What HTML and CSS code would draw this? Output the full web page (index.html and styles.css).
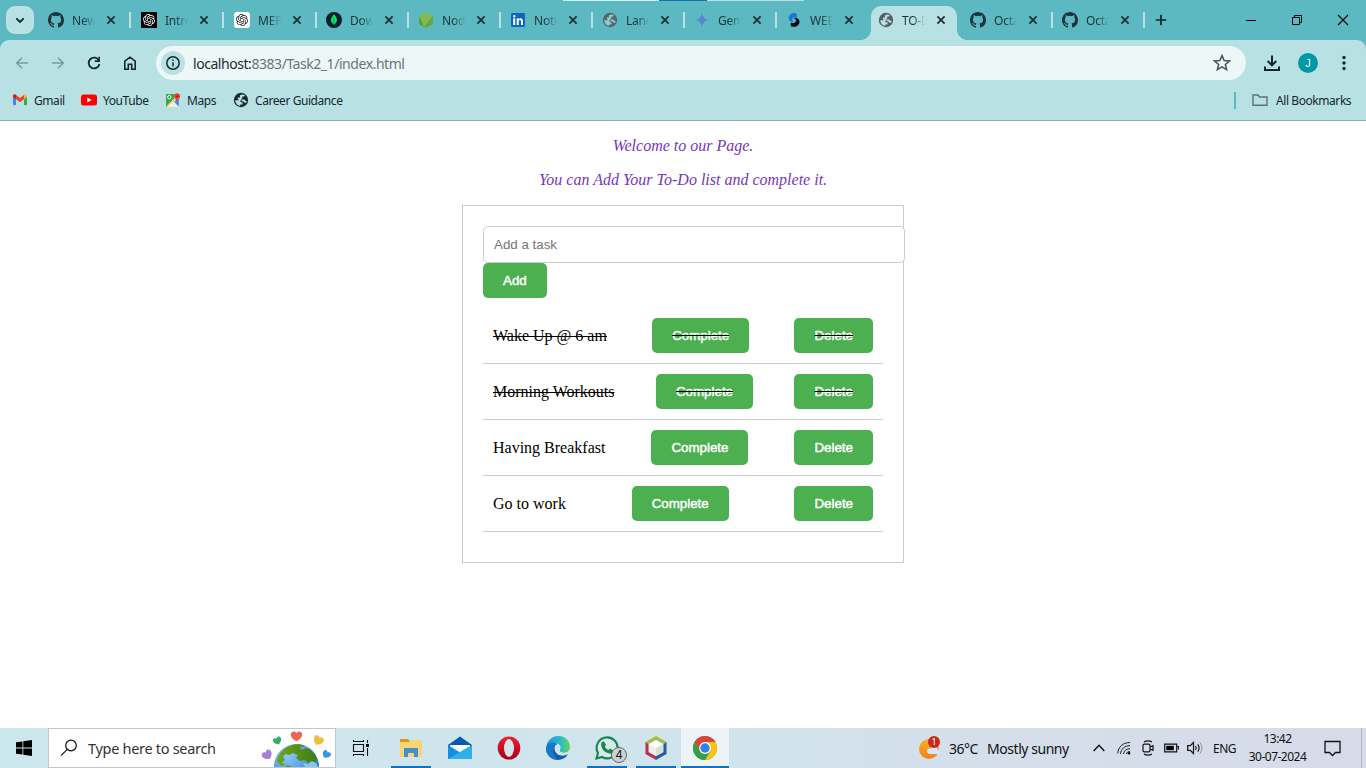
FILE: index.html
```html
<!DOCTYPE html>
<html lang="en">
<head>
<meta charset="utf-8">
<title>TO-DO List</title>
<link rel="stylesheet" href="styles.css">
</head>
<body>
<svg class="defs" aria-hidden="true">
  <symbol id="github" viewBox="0 0 16 16"><path fill="#20333d" d="M8 0C3.58 0 0 3.58 0 8c0 3.54 2.29 6.53 5.47 7.59.4.07.55-.17.55-.38 0-.19-.01-.82-.01-1.49-2.01.37-2.53-.49-2.69-.94-.09-.23-.48-.94-.82-1.13-.28-.15-.68-.52-.01-.53.63-.01 1.08.58 1.23.82.72 1.21 1.87.87 2.33.66.07-.52.28-.87.51-1.07-1.78-.2-3.64-.89-3.64-3.95 0-.87.31-1.59.82-2.15-.08-.2-.36-1.02.08-2.12 0 0 .67-.21 2.2.82a7.6 7.6 0 0 1 4 0c1.53-1.04 2.2-.82 2.2-.82.44 1.1.16 1.92.08 2.12.51.56.82 1.27.82 2.15 0 3.07-1.87 3.75-3.65 3.95.29.25.54.73.54 1.48 0 1.07-.01 1.93-.01 2.2 0 .21.15.46.55.38A8 8 0 0 0 16 8c0-4.42-3.58-8-8-8z"/></symbol>
  <symbol id="knot" viewBox="0 0 24 24"><path fill="currentColor" d="M22.282 9.821a5.985 5.985 0 0 0-.516-4.910 6.046 6.046 0 0 0-6.510-2.900A6.065 6.065 0 0 0 4.981 4.182a5.985 5.985 0 0 0-3.998 2.900 6.046 6.046 0 0 0 .743 7.097 5.980 5.980 0 0 0 .511 4.911 6.051 6.051 0 0 0 6.515 2.900A5.985 5.985 0 0 0 13.260 24a6.056 6.056 0 0 0 5.772-4.206 5.990 5.990 0 0 0 3.998-2.900 6.056 6.056 0 0 0-.748-7.073zm-9.022 12.608a4.476 4.476 0 0 1-2.876-1.040l.142-.081 4.778-2.758a.795.795 0 0 0 .393-.681v-6.737l2.020 1.169a.071.071 0 0 1 .038.052v5.582a4.504 4.504 0 0 1-4.495 4.494zM3.600 18.304a4.470 4.470 0 0 1-.535-3.014l.142.085 4.783 2.758a.771.771 0 0 0 .780 0l5.843-3.368v2.332a.080.080 0 0 1-.033.062L9.740 19.950a4.500 4.500 0 0 1-6.140-1.646zM2.340 7.896a4.485 4.485 0 0 1 2.366-1.973v5.677a.766.766 0 0 0 .388.677l5.815 3.354-2.020 1.169a.076.076 0 0 1-.071 0l-4.830-2.787A4.504 4.504 0 0 1 2.340 7.872zm16.597 3.855l-5.833-3.387L15.119 7.200a.076.076 0 0 1 .071 0l4.830 2.791a4.494 4.494 0 0 1-.676 8.105v-5.678a.790.790 0 0 0-.407-.667zm2.010-3.023l-.141-.085-4.774-2.782a.776.776 0 0 0-.785 0L9.409 9.230V6.897a.066.066 0 0 1 .028-.061l4.830-2.787a4.500 4.500 0 0 1 6.680 4.660zM8.307 12.863l-2.020-1.164a.080.080 0 0 1-.038-.057V6.075a4.500 4.500 0 0 1 7.376-3.454l-.142.081-4.778 2.758a.795.795 0 0 0-.393.681zm1.097-2.366l2.602-1.500 2.607 1.500v2.999l-2.597 1.500-2.607-1.500z"/></symbol>
  <symbol id="globe" viewBox="0 0 16 16"><circle cx="8" cy="8" r="7.2" fill="currentColor"/><path fill="var(--land)" d="M2.200 8.300h3.500c1.200 0 2 .8 2 1.900H9.500v2.300H7.200v1.400A6 6 0 0 1 2.200 8.300zM7 3.200q2.800-1.300 4.900 0L11 4.500H9.300v1.400L7.700 7.400h3.100q1.500 0 1.600 1.500h1.300a5.800 5.800 0 0 1-.9 2.200Q11 11 10.800 9.600 9.500 9.800 8.900 8.600H6.100L4.900 6.800V5.400H7z"/></symbol>
  <symbol id="x" viewBox="0 0 10 10"><path d="M1.4 1.4l7.2 7.2M8.6 1.4L1.4 8.6" stroke="#1b2c33" stroke-width="1.7"/></symbol>
  <symbol id="heart" viewBox="0 0 12 12"><path fill="currentColor" d="M6 11.300C3 9.500.3 7.500.3 4.400.3 1.200 4.300.3 6 3 7.700.3 11.700 1.200 11.700 4.400c0 3.100-2.700 5.100-5.700 6.900z"/></symbol>
</svg>

<header class="browser">
  <div class="tabstrip">
    <button class="tab-search"><svg width="10" height="7" viewBox="0 0 10 7"><path d="M1.3 1.3L5 5l3.700-3.700" fill="none" stroke="#10242a" stroke-width="1.800"/></svg></button>
    <div class="tabs">
      <div class="tab"><svg class="fav"><use href="#github"/></svg><span class="name">New</span><svg class="close"><use href="#x"/></svg></div>
      <div class="tab"><span class="fav ai ai-dark"><svg><use href="#knot"/></svg></span><span class="name">Intro</span><svg class="close"><use href="#x"/></svg></div>
      <div class="tab"><span class="fav ai ai-light"><svg><use href="#knot"/></svg></span><span class="name">MER</span><svg class="close"><use href="#x"/></svg></div>
      <div class="tab"><svg class="fav" viewBox="0 0 16 16"><circle cx="8" cy="8" r="8" fill="#001e2b"/><path d="M8 2.300c4 4.200 3.800 7.700.3 10.200L8 14l-.3-1.500C4.200 10 4 6.500 8 2.300z" fill="#00ed64"/><path d="M8 5v8" stroke="#067b40" stroke-width=".7"/></svg><span class="name">Dow</span><svg class="close"><use href="#x"/></svg></div>
      <div class="tab"><svg class="fav" viewBox="0 0 16 16"><path d="M8 .3l6.800 3.900v7.800L8 15.800 1.200 12V4.200z" fill="#7dba45"/><path d="M1.200 4.200L8 .3l6.800 3.900L6 15z" fill="#83b955"/><path d="M1.200 4.200L6 14.700 1.200 12z" fill="#5d9a3c"/><path d="M14.800 4.200V12L8 15.800l-2-1.100z" fill="#66a63e"/></svg><span class="name">Nod</span><svg class="close"><use href="#x"/></svg></div>
      <div class="tab"><svg class="fav" viewBox="0 0 16 16"><rect x="1" y="1" width="14" height="14" rx="1" fill="#0a66c2"/><path d="M3.200 6.300h2V13h-2zM6.700 6.300h2v1c1-1.800 4.300-1.500 4.300 1.700v4h-2V9.500c0-2.200-2.300-2-2.300 0V13h-2z" fill="#fff"/><circle cx="4.200" cy="4.200" r="1.200" fill="#fff"/></svg><span class="name">Noti</span><svg class="close"><use href="#x"/></svg></div>
      <div class="tab"><svg class="fav globe-tab"><use href="#globe"/></svg><span class="name">Land</span><svg class="close"><use href="#x"/></svg></div>
      <div class="tab"><svg class="fav" viewBox="0 0 16 16"><defs><linearGradient id="gem"><stop offset="0" stop-color="#4d91d8"/><stop offset=".6" stop-color="#587fd8"/><stop offset="1" stop-color="#9b83c8"/></linearGradient></defs><path d="M8 1c.9 4.300 2.700 6.100 7 7-4.300.9-6.100 2.700-7 7-.9-4.300-2.700-6.100-7-7 4.300-.9 6.100-2.700 7-7z" fill="url(#gem)"/></svg><span class="name">Gem</span><svg class="close"><use href="#x"/></svg></div>
      <div class="tab last-before"><svg class="fav" viewBox="0 0 16 16"><path d="M9.800 1.200C5 .5 2 4 3 7.200c.7 2.300 3 3 4.800 2.700C5.500 8.800 6 5.800 8.300 5.300c1.200-.3 2 .2 2.300.4.500-1.700.3-3.500-.8-4.500z" fill="#1976d2"/><path d="M5.500 14.400c5 1.500 8.400-1.700 8-5.200C13.100 6.500 10 5 7.800 6.200c2.700.6 3 3.700.5 4.600-1.500.5-2.600.1-3.300-.4-.6 1.400-.4 3 .5 4z" fill="#050b10"/></svg><span class="name">WEB</span><svg class="close"><use href="#x"/></svg></div>
      <div class="tab active"><svg class="fav globe-active"><use href="#globe"/></svg><span class="name">TO-D</span><svg class="close"><use href="#x"/></svg></div>
      <div class="tab"><svg class="fav"><use href="#github"/></svg><span class="name">Octa</span><svg class="close"><use href="#x"/></svg></div>
      <div class="tab"><svg class="fav"><use href="#github"/></svg><span class="name">Octa</span><svg class="close"><use href="#x"/></svg></div>
    </div>
    <svg class="plus" viewBox="0 0 12 12"><path d="M6 .8v10.400M.8 6h10.400" stroke="#10242a" stroke-width="1.700"/></svg>
    <div class="win">
      <svg viewBox="0 0 12 12"><path d="M1 6.500h10" stroke="#000"/></svg>
      <svg viewBox="0 0 12 12"><path d="M1.500 3.500h7v7h-7zM3.500 3.500v-2h7v7h-2" fill="none" stroke="#000"/></svg>
      <svg viewBox="0 0 12 12"><path d="M1 1l10 10M11 1L1 11" stroke="#000" stroke-width="1.100"/></svg>
    </div>
    <div class="peek"></div>
  </div>

  <div class="chrome-panel">
    <div class="toolbar">
      <svg class="nav" viewBox="0 0 16 16"><path d="M14 8H2.800M8 2.700L2.700 8 8 13.300" fill="none" stroke="#7c9a9f" stroke-width="1.500"/></svg>
      <svg class="nav" viewBox="0 0 16 16"><path d="M2 8h11.200M8 2.700L13.300 8 8 13.300" fill="none" stroke="#7c9a9f" stroke-width="1.500"/></svg>
      <svg class="nav" viewBox="0 0 16 16"><path d="M13 5.700A5.400 5.400 0 1 0 13.400 9" fill="none" stroke="#14272d" stroke-width="1.800"/><path d="M13.900 1.800v5.100H8.800V5.300h3.500V1.800z" fill="#14272d"/></svg>
      <svg class="nav" viewBox="0 0 16 16"><path d="M2.800 6.200L8 2.200l5.200 4v8H9.700V9.300H6.300v4.900H2.800z" fill="none" stroke="#14272d" stroke-width="1.600"/></svg>
      <div class="url">
        <span class="info"><svg viewBox="0 0 16 16"><circle cx="8" cy="8" r="6.200" fill="none" stroke="#14272d" stroke-width="1.500"/><path d="M8 7.200v4.200M8 4.500v1.600" stroke="#14272d" stroke-width="1.500"/></svg></span>
        <span class="address"><b>localhost:</b>8383/Task2_1/index.html</span>
        <svg class="star" viewBox="0 0 16 16"><path d="M8 1.500l1.900 4.300 4.700.4-3.600 3.100 1.100 4.600L8 11.500l-4.100 2.400L5 9.300 1.400 6.200l4.700-.4z" fill="none" stroke="#46575c" stroke-width="1.400"/></svg>
      </div>
      <svg class="download" viewBox="0 0 18 18"><path d="M9 1.500v9.500M4.700 7L9 11.300 13.300 7M2 12.500V16h14v-3.500" fill="none" stroke="#14272d" stroke-width="2"/></svg>
      <span class="avatar">J</span>
      <svg class="dots" viewBox="0 0 4 16"><g fill="#14272d"><circle cx="2" cy="2.500" r="1.700"/><circle cx="2" cy="8" r="1.700"/><circle cx="2" cy="13.500" r="1.700"/></g></svg>
    </div>
    <nav class="bookmarks">
      <a class="bm gmail"><svg viewBox="0 0 16 16"><path d="M1 4v9h3V7z" fill="#4285f4"/><path d="M15 4v9h-3V7z" fill="#34a853"/><path d="M1 4.500V4c0-1.600 1.700-2 2.700-1.200L8 6l4.300-3.200V7L8 10.200 3.800 7z" fill="#ea4335"/><path d="M1 4c0-1.700 1.700-2 2.700-1.200L4 3v4.200L1 5z" fill="#c5221f"/><path d="M15 4c0-1.700-1.700-2-2.700-1.200L12 3v4.200L15 5z" fill="#fbbc04"/></svg><span>Gmail</span></a>
      <a class="bm youtube"><svg viewBox="0 0 16 16"><rect y="2.500" width="16" height="11" rx="2.500" fill="#f00"/><path d="M6.300 5.600v4.800L10.700 8z" fill="#fff"/></svg><span>YouTube</span></a>
      <a class="bm maps"><svg viewBox="0 0 16 16"><path d="M1 2h12.500v12.500H1z" fill="#34a853"/><path d="M1 14.500l12-12v3.500l-8 8.500z" fill="#fbd04a"/><path d="M3 15l6-6 5.500 6z" fill="#eceff1"/><path d="M13.500 6v8.500L8.500 9z" fill="#4285f4"/><path d="M3.500 15L12 6.500" stroke="#fff"/><path d="M12 10c-.3-2.300-2.500-3-2.800-5.400-.6-4.400 6.200-4.800 6 0C15 7 12.500 7.500 12 10z" fill="#ea4335"/><circle cx="12.200" cy="4.300" r="1.100" fill="#7b231d"/><circle cx="4.300" cy="5.200" r="1.700" fill="none" stroke="#fff"/></svg><span>Maps</span></a>
      <a class="bm career"><svg class="globe-bm"><use href="#globe"/></svg><span>Career Guidance</span></a>
      <a class="bm all"><svg viewBox="0 0 16 16"><path d="M1 3h5l1.500 2H15v8.300H1z" fill="none" stroke="#5b7278" stroke-width="1.400"/></svg><span>All Bookmarks</span></a>
    </nav>
  </div>
</header>

<main class="page">
  <p>Welcome to our Page.</p>
  <p>You can Add Your To-Do list and complete it.</p>
  <section class="todo">
    <input type="text" placeholder="Add a task">
    <button class="btn">Add</button>
    <ul>
      <li class="done"><span>Wake Up @ 6 am</span><button class="btn">Complete</button><button class="btn">Delete</button></li>
      <li class="done"><span>Morning Workouts</span><button class="btn">Complete</button><button class="btn">Delete</button></li>
      <li><span>Having Breakfast</span><button class="btn">Complete</button><button class="btn">Delete</button></li>
      <li><span>Go to work</span><button class="btn">Complete</button><button class="btn">Delete</button></li>
    </ul>
  </section>
</main>

<footer class="taskbar">
  <div class="start"><svg width="16" height="16" viewBox="0 0 16 16"><path d="M0 2.300l6.500-.9v6.100H0zM7.300 1.300L16 0v7.500H7.300zM0 8.400h6.500v6.200L0 13.700zM7.300 8.400H16V16l-8.700-1.200z"/></svg></div>
  <div class="search">
    <svg class="lens" viewBox="0 0 18 18"><circle cx="11" cy="6.500" r="5.300" fill="none" stroke="#111" stroke-width="1.200"/><path d="M7.300 10.300L1 16.700" stroke="#111" stroke-width="1.200"/></svg>
    <span>Type here to search</span>
    <svg class="earth" viewBox="0 0 74 38">
      <defs><radialGradient id="sea" cx=".3" cy=".25" r=".8"><stop offset="0" stop-color="#8bc9f8"/><stop offset="1" stop-color="#2874c8"/></radialGradient><linearGradient id="land"><stop offset="0" stop-color="#72a51f"/><stop offset="1" stop-color="#3c7d13"/></linearGradient></defs>
      <circle cx="35.500" cy="37.500" r="22.500" fill="url(#sea)"/>
      <path d="M30 16.500q4-2 10-1l4 1.500-5 1 1 3 5-2 3 1q6 4 8 10l-2 4-4-2-3 2-3-3-5 1-4-3 2-3-5-2-4 2-4-1-2 3 2 3-3 2 3 3-4 1-4-5q1-9 11-14.500z" fill="url(#land)"/>
      <path d="M42 34l5 1 4-3 4 2 2 4H44z" fill="#8bc4ee"/>
      <path d="M25 38l1-2 5 2z" fill="#60961e"/>
      <use href="#heart" x="29" y="1" width="13" height="12" color="#ec6653"/>
      <use href="#heart" x="12" y="7" width="9" height="9" color="#35ad65" transform="rotate(-22 17 12)"/>
      <use href="#heart" x="51" y="6" width="11" height="11" color="#efbd39" transform="rotate(28 57 13)"/>
      <use href="#heart" x="1" y="20" width="11" height="11" color="#a780d4" transform="rotate(-35 7 26)"/>
      <use href="#heart" x="60" y="21" width="9" height="10" color="#3698dc" transform="rotate(35 66 27)"/>
    </svg>
  </div>
  <div class="taskview"><svg width="17" height="16" viewBox="0 0 17 16"><path d="M1.500 4.500h10v7h-10zM1 1.500h11M1 14.500h11M1.500 0v2M11.500 0v2M1.500 14v2M11.500 14v2M15.500 0v3M15.500 8v8" fill="none" stroke="#111" stroke-width="1.100"/><path d="M14 4h3v3h-3z"/></svg></div>
  <div class="apps">
    <div class="app open"><svg viewBox="0 0 24 24"><path d="M1 3h8l2 2h11v5H1z" fill="#d69b1c"/><path d="M1 6h9l2-2h11v17H1z" fill="#f8d675"/><path d="M5 12h14v9h-4v-4H9v4H5z" fill="#3f91d0"/></svg></div>
    <div class="app"><svg viewBox="0 0 24 24"><path d="M0 9l12-8.500L24 9v3H0z" fill="#075aae"/><path d="M2 9h20v8H2z" fill="#f4fbff"/><path d="M0 9l12 7.500L24 9v14H0z" fill="#168ddd"/><path d="M0 23L24 9v14z" fill="#2fb0ea"/></svg></div>
    <div class="app"><svg viewBox="0 0 24 24"><defs><linearGradient id="op" x2="0" y2="1"><stop offset="0" stop-color="#f51d32"/><stop offset="1" stop-color="#a70014"/></linearGradient></defs><ellipse cx="12" cy="12" rx="11.300" ry="11.500" fill="url(#op)"/><ellipse cx="12" cy="12" rx="5" ry="9" fill="#d4e5ee"/></svg></div>
    <div class="app"><svg viewBox="0 0 24 24"><defs><linearGradient id="edge"><stop offset="0" stop-color="#2394e0"/><stop offset=".55" stop-color="#25b9cd"/><stop offset="1" stop-color="#63d65c"/></linearGradient></defs><path d="M.3 11C2-3 22-4 24 10c.6 5-4 8-9 6-2-.8-1-2-.5-3.500 1-4-4-6-7.500-5C4 8 1 9 .3 11z" fill="url(#edge)"/><path d="M.2 12C1 6 8 6 11 8c-4 2-3 9 2 11 4 1.500 7 0 9-.7C18 25 9 25.500 4 21c-3-3-4-6-3.800-9z" fill="#105ba8"/><path d="M.2 12C1 6 8 6 11 8c-6 3-4 13 2 16C6 24.500-.500 19 .2 12z" fill="#1679c7"/></svg></div>
    <div class="app open wa"><svg viewBox="0 0 24 24"><path d="M1.500 22.500L3 17A10.500 10.500 0 1 1 7 21z" fill="#d8e9ec" stroke="#178253" stroke-width="2.100"/><path d="M7 6l2-.5 2 3.500-1.200 1.600c1 1.900 2 2.700 3.700 3.500L15 12.600l3.500 1.900c-.2 2.500-2 3.500-4 3.100C10 16.700 7.300 14 6.300 10c-.3-1.500-.1-3 .7-4z" fill="#178253"/></svg><i>4</i></div>
    <div class="app open"><svg viewBox="0 0 24 24"><path d="M12 0l10.500 6-3 2L12 4 4.500 8l-3-2z" fill="#a5bd43"/><path d="M1.500 6l3 2v8l7.500 4v4L1.500 18z" fill="#b82f5b"/><path d="M22.500 6l-3 2v8L12 20v4l10.500-6z" fill="#295c9b"/><path d="M12 4l7 4v8l-7 4-7-4V8z" fill="#fff"/><path d="M12 12l7-4v8l-7 4z" fill="#d9e1cf"/><path d="M5 8l7 4v8l-7-4z" fill="#f0eee8"/></svg></div>
    <div class="app open current"><svg viewBox="0 0 24 24"><circle cx="12" cy="12" r="12" fill="#34a853"/><path d="M1.600 6A12 12 0 0 1 22.400 6H12L6.800 15z" fill="#dc4437"/><path d="M22.400 6A12 12 0 0 1 12 24l5.200-9L12 6z" fill="#fbc116"/><path d="M1.600 6l5.200 9 5.200 3 5.200-3L12 24A12 12 0 0 1 1.600 6z" fill="#34a047"/><circle cx="12" cy="12" r="5.900" fill="#fff"/><circle cx="12" cy="12" r="4.700" fill="#347fe8"/></svg></div>
  </div>
  <div class="tray">
    <svg class="weather" viewBox="0 0 24 24"><defs><linearGradient id="sun" x2="0" y2="1"><stop offset="0" stop-color="#f5b126"/><stop offset="1" stop-color="#f18116"/></linearGradient></defs><circle cx="11" cy="13" r="10" fill="url(#sun)"/><path d="M12 18a3 3 0 0 1-3-3c0-2 2-3 3-2 2-4 8-2 8 1 4 0 4 4 1 4z" fill="#d7e6fa"/><circle cx="16" cy="6" r="6" fill="#c42b1c"/><text x="16" y="9.300" text-anchor="middle" fill="#fff">1</text></svg>
    <span class="temp">36°C</span><span class="sky">Mostly sunny</span>
    <svg class="chev" viewBox="0 0 12 8"><path d="M.7 7L6 1.300 11.300 7" fill="none" stroke="#111" stroke-width="1.400"/></svg>
    <svg class="wifi" viewBox="0 0 14 14"><g fill="none" stroke="#222"><path d="M.8 12.500C1 6 6 1.500 13 1.500M3.500 13c.2-4.800 4-8.300 9.500-8.400M6.500 13c.2-3 2.700-5.300 6.500-5.300M9.300 13c.2-1.500 1.500-2.500 3.700-2.500" /></g><circle cx="12" cy="12.300" r="1.300"/></svg>
    <svg class="meet" viewBox="0 0 12 16"><path d="M2 2Q6-.3 10 2M2 14q4 2.300 8 0M1 5.500Q1 4.200 2.300 4.200h4.400Q8 4.200 8 5.500v5q0 1.300-1.300 1.300H2.300Q1 11.800 1 10.500zM8 7l3-1.300v4.600L8 9" fill="none" stroke="#111" stroke-width="1.200"/></svg>
    <svg class="batt" viewBox="0 0 15 10"><path d="M.7 1.200h12v7.600H.7zM13.500 3.500h1v3" fill="none" stroke="#111" stroke-width="1.200"/><path d="M2.300 2.800h7.500v4.400H2.300z"/></svg>
    <svg class="vol" viewBox="0 0 17 14"><path d="M.7 4.700h2.600L6.500 1.500v11L3.300 9.300H.7zM8.500 5q1.500 2 0 4M10.700 3.300q2.800 3.700 0 7.400" fill="none" stroke="#111" stroke-width="1.200"/><path d="M13 1.500q4 5.500 0 11" fill="none" stroke="#8a929b"/></svg>
    <span class="lang">ENG</span>
    <div class="clock"><span>13:42</span><span class="date">30-07-2024</span></div>
    <svg class="note" viewBox="0 0 17 17"><path d="M1 1.500h15v11h-4.500l-3 3-3-3H1z" fill="none" stroke="#111" stroke-width="1.300"/></svg>
    <div class="desk"></div>
  </div>
</footer>
</body>
</html>
```
FILE: styles.css
```css
* { box-sizing: border-box; }
body { margin: 0; width: 1366px; height: 768px; overflow: hidden; display: flex; flex-direction: column; background: #fff; font-family: "Noto Sans", "Open Sans", sans-serif; }
svg { display: block; flex: none; }
button { border: 0; padding: 0; }
.defs { position: absolute; width: 0; height: 0; }

.browser { height: 121px; background: #5cb8c1; flex: none; }
.tabstrip { position: relative; height: 40px; display: flex; align-items: center; }
.tab-search { margin: 0 5px 0 6px; width: 28px; height: 28px; border-radius: 9px; background: #b8e1e4; display: grid; place-items: center; }
.tabs { display: grid; grid-template-columns: 92px 93px 93px repeat(9, 92px); height: 40px; }
.tab { position: relative; height: 40px; display: flex; align-items: center; padding-left: 9px; }
.tab::after { content: ""; position: absolute; right: 0; top: 12px; width: 2px; height: 16px; background: #b8e1e4; }
.tab.last-before::after { display: none; }
.fav { width: 16px; height: 16px; flex: none; }
.name { width: 24px; margin-left: 8px; font-size: 12px; letter-spacing: -.2px; white-space: nowrap; overflow: hidden; color: #1b343b; -webkit-mask-image: linear-gradient(90deg, #000 45%, transparent 96%); mask-image: linear-gradient(90deg, #000 45%, transparent 96%); }
.close { width: 10px; height: 10px; margin-left: 10px; }
.tab:nth-child(2), .tab:nth-child(3) { padding-left: 10px; }
.ai { display: grid; place-items: center; }
.ai svg { width: 12px; height: 12px; }
.ai-dark { background: #000; color: #fff; }
.ai-light { background: #fff; color: #222; border-radius: 3px; }
.globe-tab { color: #55676c; --land: #8ecbd1; }
.globe-active { color: #555e62; --land: #b8e1e4; }
.globe-bm { color: #1d2b30; --land: #b8e1e4; }
.tab.active { z-index: 0; }
.tab.active::before { content: ""; position: absolute; z-index: -1; left: 2px; width: 86px; top: 6px; bottom: 0; border-radius: 10px 10px 0 0; background: #b8e1e4; }
.tab.active::after { z-index: -1; left: -8px; right: auto; top: 30px; width: 106px; height: 10px; background: radial-gradient(circle at 0 0, transparent 9.600px, #b8e1e4 10px) 0 0 / 10px 10px no-repeat, radial-gradient(circle at 100% 0, transparent 9.600px, #b8e1e4 10px) 100% 0 / 10px 10px no-repeat; }
.plus { width: 12px; height: 12px; margin-left: 10px; }
.win { margin: 0 17px 0 auto; display: flex; gap: 34px; }
.win svg { width: 12px; height: 12px; }
.peek { position: absolute; left: 563px; top: 0; width: 241px; height: 1px; background: linear-gradient(90deg, #d3eef0 96px, #1272b6 96px 144px, #b8e1e4 144px); }

.chrome-panel { height: 81px; background: #b8e1e4; border-radius: 9px 9px 0 0; border-bottom: 1px solid #91aeb1; }
.toolbar { height: 46px; display: flex; align-items: center; padding-left: 14px; }
.nav { width: 16px; height: 16px; margin-right: 20px; }
.nav:nth-child(4) { margin-right: 18px; }
.url { width: 1090px; height: 34px; border-radius: 17px; background: #edf7f8; display: flex; align-items: center; padding-left: 5px; }
.info { width: 24px; height: 24px; border-radius: 50%; background: #b8e1e4; display: grid; place-items: center; }
.info svg { width: 16px; height: 16px; }
.address { margin-left: 8px; font-size: 14px; letter-spacing: -.45px; color: #66767a; }
.address b { font-weight: 400; color: #1b2a2e; }
.star { width: 18px; height: 18px; margin: 0 15px 0 auto; }
.download { width: 18px; height: 18px; margin-left: 17px; }
.avatar { width: 20px; height: 20px; margin-left: 17px; border-radius: 50%; background: #0097a7; color: #fff; display: grid; place-items: center; font: 11px "Liberation Sans", sans-serif; }
.dots { width: 4px; height: 16px; margin-left: 24px; }
.bookmarks { display: flex; align-items: center; height: 28px; font-size: 12px; color: #14272d; padding-left: 12px; }
.bm { display: flex; align-items: center; gap: 6px; white-space: nowrap; letter-spacing: -.43px; }
.bm svg { width: 16px; height: 16px; }
.gmail { width: 69px; }
.youtube { width: 85px; }
.maps { width: 67px; }
.maps svg { margin-left: -1px; }
.all { margin-left: auto; margin-right: 15px; border-left: 2px solid #5cb8c1; padding-left: 16px; gap: 8px; width: 117px; }

.page { flex: 1; font: 16px/18px "Liberation Serif", "Times New Roman", serif; padding-top: 16px; }
.page p { margin: 0 0 16px; text-align: center; font-style: italic; color: #7636bd; }
.todo { width: 442px; height: 358px; margin: 0 0 0 462px; border: 1px solid #ccc; padding: 20px; }
.todo input { display: block; width: 422px; height: 37px; padding: 10px; border: 1px solid #ccc; border-radius: 5px; font: 13.333px "Liberation Sans", Arial, sans-serif; }
.btn { height: 35px; padding: 0 20px; background: #4caf50; color: #fff; border-radius: 5px; font: 13.333px "Liberation Sans", Arial, sans-serif; -webkit-text-stroke: .45px #fff; display: block; }
.todo ul { list-style: none; margin: 10px 0; padding: 0; }
.todo li { height: 56px; padding: 10px; display: flex; justify-content: space-between; align-items: center; border-bottom: 1px solid #ccc; }
.done span, .done .btn { text-decoration: line-through #000; }

.taskbar { height: 40px; flex: none; display: flex; background: linear-gradient(90deg, #cde7ef, #d0e4ed 50%, #d5deea 75%, #d7dbe9); color: #111; }
.start { width: 48px; display: grid; place-items: center; }
.search { width: 288px; height: 40px; background: #fff; border: 1px solid #bfc9cd; display: flex; align-items: center; padding-left: 11px; font-size: 14.500px; letter-spacing: -.3px; color: #333; }
.lens { width: 18px; height: 18px; margin-right: 10px; }
.earth { width: 74px; height: 38px; margin-left: auto; }
.taskview { width: 48px; display: grid; place-items: center; }
.apps { display: flex; padding-left: 3px; gap: 1px; }
.app { position: relative; width: 48px; height: 40px; display: grid; place-items: center; }
.app svg { width: 24px; height: 24px; }
.app.open::after { content: ""; position: absolute; left: 4px; right: 4px; bottom: 0; height: 2px; background: #0873c9; }
.current { background: #edf4f7; }
.app.current::after { left: 0; right: 0; }
.wa i { position: absolute; left: 28px; top: 19px; width: 16px; height: 16px; border-radius: 50%; border: 1px solid #666; background: #cbd2d5; font: 12px/14px "Liberation Sans", sans-serif; text-align: center; }
.tray { margin-left: auto; width: 448px; display: flex; align-items: center; white-space: nowrap; font-size: 14px; }
.weather { width: 24px; height: 24px; }
.weather text { font: 9px "Noto Sans", sans-serif; }
.temp { width: 38px; margin-left: 7px; letter-spacing: -.5px; }
.sky { width: 106px; letter-spacing: -.45px; }
.chev { width: 12px; height: 8px; }
.wifi { width: 14px; height: 14px; margin-left: 12px; }
.meet { width: 12px; height: 16px; margin-left: 11px; }
.batt { width: 15px; height: 10px; margin-left: 10px; }
.vol { width: 17px; height: 14px; margin-left: 8px; }
.lang { width: 36px; margin-left: 9px; font-size: 12px; letter-spacing: -.5px; }
.clock { width: 59px; margin-left: -1px; display: flex; flex-direction: column; text-align: center; font-size: 12px; line-height: 18px; letter-spacing: -.5px; }
.note { width: 17px; height: 17px; margin-left: 17px; }
.desk { width: 1px; height: 40px; background: #aeb7c4; margin-left: 20px; }
```
